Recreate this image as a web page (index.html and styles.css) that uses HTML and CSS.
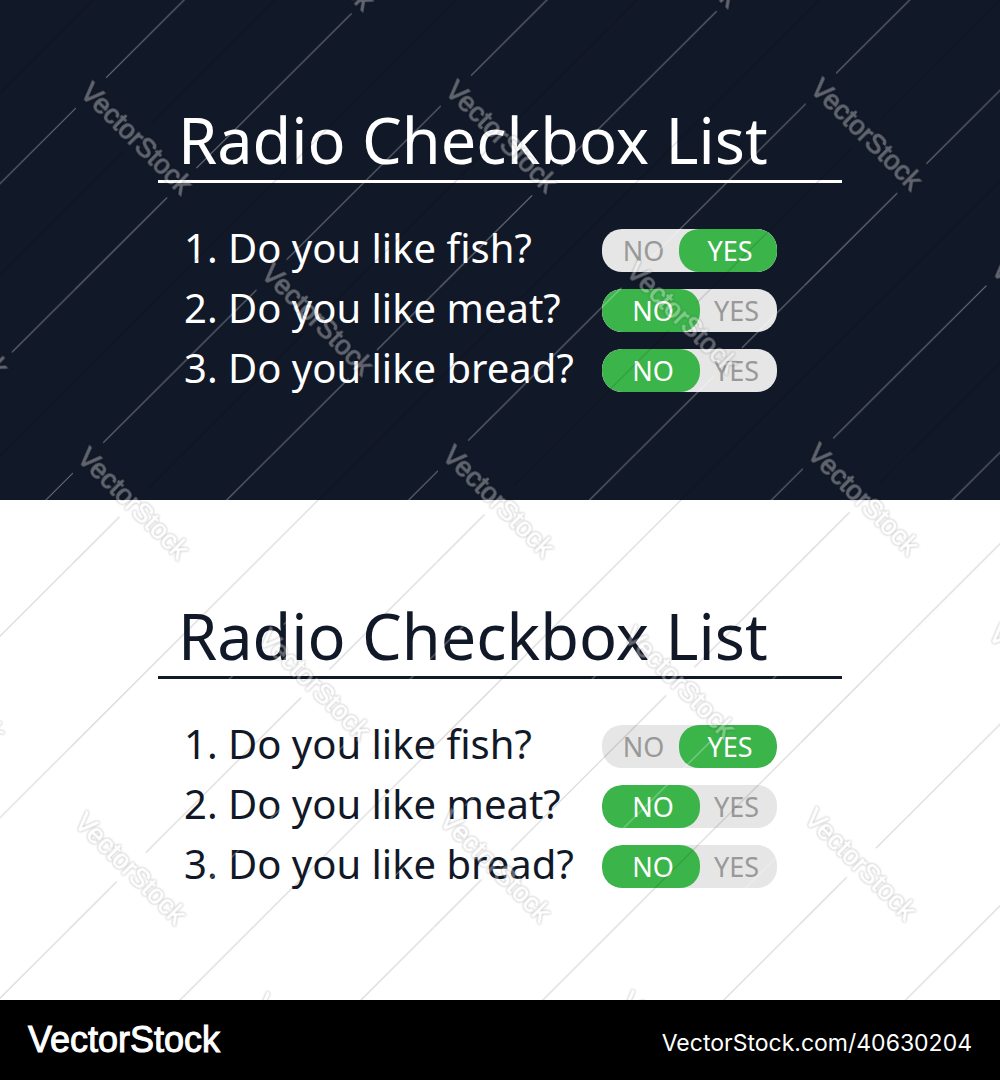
FILE: index.html
```html
<!DOCTYPE html>
<html lang="en">
<head>
    <meta charset="UTF-8">
    <meta name="viewport" content="width=device-width, initial-scale=1.0">
    <title>Radio Checkbox List</title>
    <link rel="stylesheet" href="styles.css">
</head>
<body>
    <main class="sheet">
        <form class="panel panel-dark">
            <div class="content">
                <h2>Radio Checkbox List</h2>
                <div class="questions">
                    <div class="question" role="radiogroup" aria-labelledby="dark-q1">
                        <span id="dark-q1">1. Do you like fish?</span>
                        <div class="switch">
                            <label class="option"><input type="radio" name="dark-fish" value="no">NO</label>
                            <label class="option"><input type="radio" name="dark-fish" value="yes" checked>YES</label>
                        </div>
                    </div>
                    <div class="question" role="radiogroup" aria-labelledby="dark-q2">
                        <span id="dark-q2">2. Do you like meat?</span>
                        <div class="switch">
                            <label class="option"><input type="radio" name="dark-meat" value="no" checked>NO</label>
                            <label class="option"><input type="radio" name="dark-meat" value="yes">YES</label>
                        </div>
                    </div>
                    <div class="question" role="radiogroup" aria-labelledby="dark-q3">
                        <span id="dark-q3">3. Do you like bread?</span>
                        <div class="switch">
                            <label class="option"><input type="radio" name="dark-bread" value="no" checked>NO</label>
                            <label class="option"><input type="radio" name="dark-bread" value="yes">YES</label>
                        </div>
                    </div>
                </div>
            </div>
        </form>

        <form class="panel panel-light">
            <div class="content">
                <h2>Radio Checkbox List</h2>
                <div class="questions">
                    <div class="question" role="radiogroup" aria-labelledby="light-q1">
                        <span id="light-q1">1. Do you like fish?</span>
                        <div class="switch">
                            <label class="option"><input type="radio" name="light-fish" value="no">NO</label>
                            <label class="option"><input type="radio" name="light-fish" value="yes" checked>YES</label>
                        </div>
                    </div>
                    <div class="question" role="radiogroup" aria-labelledby="light-q2">
                        <span id="light-q2">2. Do you like meat?</span>
                        <div class="switch">
                            <label class="option"><input type="radio" name="light-meat" value="no" checked>NO</label>
                            <label class="option"><input type="radio" name="light-meat" value="yes">YES</label>
                        </div>
                    </div>
                    <div class="question" role="radiogroup" aria-labelledby="light-q3">
                        <span id="light-q3">3. Do you like bread?</span>
                        <div class="switch">
                            <label class="option"><input type="radio" name="light-bread" value="no" checked>NO</label>
                            <label class="option"><input type="radio" name="light-bread" value="yes">YES</label>
                        </div>
                    </div>
                </div>
            </div>
        </form>

        <!-- watermark over both panels -->
        <svg class="watermark" aria-hidden="true">
            <defs>
                <pattern id="lines" width="365" height="365" patternUnits="userSpaceOnUse" patternTransform="matrix(1 -0.006 -0.008 1 76 92)">
                    <path class="line-light" d="M30 351L182 199M212 169L365 16M121 77L198 0M198 365L275 288M303 260L365 198M0 198L92 106"/>
                    <path class="line-dark" d="M76 31L107 0M107 365L230 242M258 214L365 107M0 107L47 60M0 290L290 0M290 365L365 290"/>
                </pattern>
            </defs>
            <rect width="100%" height="100%" fill="url(#lines)"/>
            <g class="marks">
                <text transform="translate(261 -90) rotate(45)">VectorStock</text>
                <text transform="translate(626 -93) rotate(45)">VectorStock</text>
                <text transform="translate(79 94) rotate(45)">VectorStock</text>
                <text transform="translate(444 92) rotate(45)">VectorStock</text>
                <text transform="translate(809 90) rotate(45)">VectorStock</text>
                <text transform="translate(-105 277) rotate(45)">VectorStock</text>
                <text transform="translate(260 275) rotate(45)">VectorStock</text>
                <text transform="translate(625 273) rotate(45)">VectorStock</text>
                <text transform="translate(990 271) rotate(45)">VectorStock</text>
                <text transform="translate(76 459) rotate(45)">VectorStock</text>
                <text transform="translate(441 457) rotate(45)">VectorStock</text>
                <text transform="translate(806 455) rotate(45)">VectorStock</text>
                <text transform="translate(-108 642) rotate(45)">VectorStock</text>
                <text transform="translate(257 640) rotate(45)">VectorStock</text>
                <text transform="translate(622 638) rotate(45)">VectorStock</text>
                <text transform="translate(987 636) rotate(45)">VectorStock</text>
                <text transform="translate(73 824) rotate(45)">VectorStock</text>
                <text transform="translate(438 822) rotate(45)">VectorStock</text>
                <text transform="translate(803 820) rotate(45)">VectorStock</text>
                <text transform="translate(254 1005) rotate(45)">VectorStock</text>
                <text transform="translate(619 1003) rotate(45)">VectorStock</text>
            </g>
        </svg>
    </main>

    <footer class="footer">
        <span class="brand">VectorStock</span>
        <span class="address">VectorStock.com/40630204</span>
    </footer>
</body>
</html>
```
FILE: styles.css
```css
* {
    box-sizing: border-box;
}

body {
    font-family: "Noto Sans", "Open Sans", sans-serif;
    margin: 0;
    min-height: 100vh;
    display: flex;
    flex-direction: column;
    background-color: #ffffff;
}

.sheet {
    position: relative;
    flex: 1;
    display: grid;
    grid-template-rows: 1fr 1fr;
    overflow: hidden;
}

.panel {
    padding: 100px 20px;
}

.panel-dark {
    background-color: #111827;
    color: #ffffff;
}

.panel-light {
    padding-top: 96px;
    background-color: #ffffff;
    color: #111827;
}

.content {
    max-width: 684px;
    margin: 0 auto;
}

h2 {
    margin: 0;
    padding-left: 20px;
    border-bottom: 3px solid;
    font-size: 63px;
    font-weight: 400;
    line-height: 80px;
}

.questions {
    display: grid;
    gap: 17px;
    padding: 46px 65px 0 26px;
}

.question {
    display: flex;
    justify-content: space-between;
    align-items: flex-start;
    font-size: 40px;
    line-height: 38px;
}

.switch {
    display: flex;
    width: 175px;
    height: 43px;
    border-radius: 20px;
    background-color: #e6e6e6;
    overflow: hidden;
}

.option {
    flex: 1;
    border-radius: 20px;
    color: #999999;
    font-size: 27px;
    line-height: 43px;
    text-align: center;
    cursor: pointer;
}

.option:first-child {
    padding-left: 6px;
}

.option:last-child {
    padding-right: 4px;
}

.option:has(input:checked) {
    flex: 0 0 98px;
    background-color: #3bb54a;
    color: #ffffff;
    padding: 0 0 0 4px;
}

.option input {
    appearance: none;
    position: absolute;
    margin: 0;
}

.watermark {
    position: absolute;
    top: 0;
    left: 0;
    width: 100%;
    height: 100%;
    pointer-events: none;
}

.line-light {
    fill: none;
    stroke: rgba(255, 255, 255, 0.4);
}

.line-dark {
    fill: none;
    stroke: rgba(0, 0, 0, 0.18);
}

.marks {
    font-family: "Liberation Sans", Arial, sans-serif;
    font-size: 27px;
    fill: #ffffff;
    stroke: #ffffff;
    opacity: 0.33;
    filter: drop-shadow(0 0 1px #000000);
}

.footer {
    display: flex;
    justify-content: space-between;
    align-items: center;
    padding: 0 28px;
    height: 80px;
    background-color: #000000;
    color: #ffffff;
}

.brand {
    font-family: "Liberation Sans", Arial, sans-serif;
    font-size: 36px;
    -webkit-text-stroke: 1px #ffffff;
}

.address {
    font-family: Inter, sans-serif;
    font-size: 23px;
    padding-top: 6px;
}
```
